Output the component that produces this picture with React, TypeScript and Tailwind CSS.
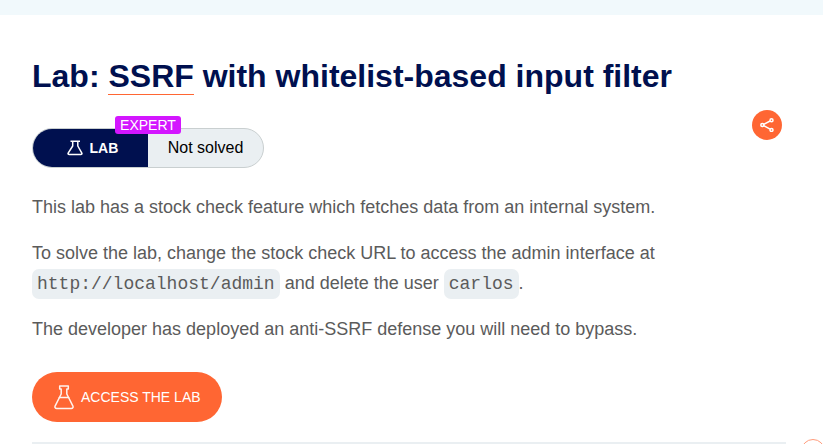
import React from 'react';

function Flask() {
  return (
    <svg className="h-[25px] w-[20px] shrink-0" viewBox="0 0 20 25" fill="none" stroke="#fff3ee" strokeWidth="1.5" strokeLinejoin="round" strokeLinecap="round">
      <path d="M5.700 1h8.600v3h-1.500V9l6 11.800c.7 1.500 0 2.700-1.500 2.700H2.700c-1.500 0-2.200-1.200-1.500-2.700L7.200 9V4H5.700z" />
      <path d="M5.300 12.500h9.400" />
    </svg>
  );
}

function LabFlask() {
  return (
    <svg className="h-4 w-4 shrink-0" viewBox="0 0 16 16" fill="none" stroke="white" strokeWidth="1.5" strokeLinejoin="round">
      <path d="M3.500 1.200h9.500M5.700 1.200v4.800L1.300 12.800c-.6 1 0 1.700 1 1.700h11.400c1 0 1.600-.7 1-1.700L10.800 6V1.200" />
    </svg>
  );
}

function Code({ children }: { children: React.ReactNode }) {
  return (
    <code className="rounded-[7px] bg-[#eaeff2] p-[5px] font-['Liberation_Mono',monospace] text-[18px] leading-[20px]">{children}</code>
  );
}

export default function App() {
  return (
    <div className="relative h-[444px] w-[823px] overflow-hidden bg-white font-['Liberation_Sans',Arial,sans-serif] text-[#5b5b5b]">
      <header className="h-[15px] bg-[#f1f9fc]" />
      <main className="ml-8 w-[754px]">
        <h1 className="pt-[41px] text-[32px] leading-[40px] font-bold whitespace-nowrap text-[#00104f]">
          Lab: <a className="border-b border-[#ff6633]">SSRF</a> with whitelist-based input filter
        </h1>
        <div className="mt-[14px] flex h-[58px] justify-between pr-1">
          <div className="relative mt-[18px] flex h-10 w-[232px] rounded-full border border-[#c9cfd0] bg-[#eaeff2]">
            <div className="flex w-[115px] items-center gap-[7px] rounded-l-full bg-[#00104f] pl-[33.5px] text-[14px] font-bold text-white">
              <LabFlask />
              <span>LAB</span>
            </div>
            <div className="flex flex-1 items-center justify-center text-[16px] text-black">
              <span>Not solved</span>
            </div>
            <span className="absolute top-[-13px] left-[82px] h-[18px] w-[66px] rounded-[3px] bg-[#d316ff] text-center text-[14px] leading-[18px] text-white">EXPERT</span>
          </div>
          <button className="flex h-[30px] w-[30px] items-center justify-center rounded-full bg-[#ff6633]">
            <svg className="h-[14px] w-[14px]" viewBox="0 0 14 14" fill="none" stroke="white" strokeWidth="1.500">
              <circle cx="2.300" cy="7" r="1.500" />
              <circle cx="11.500" cy="2.300" r="1.500" />
              <circle cx="11.500" cy="11.900" r="1.500" />
              <path d="M3.700 6.300l6.400-3.300M3.700 7.700l6.400 3.500" />
            </svg>
          </button>
        </div>
        <div className="mt-6 flex flex-col gap-4 text-[18px] leading-[30px]">
          <p>This lab has a stock check feature which fetches data from an internal system.</p>
          <p>
            To solve the lab, change the stock check URL to access the admin interface at<br />
            <Code>http://localhost/admin</Code> and delete the user <Code>carlos</Code>.
          </p>
          <p>The developer has deployed an anti-SSRF defense you will need to bypass.</p>
        </div>
        <button className="mt-7 flex h-[50px] w-[190px] items-center gap-[7px] rounded-full bg-[#ff6633] pl-[22px] text-[14px] text-white">
          <Flask />
          <span className="whitespace-nowrap">ACCESS THE LAB</span>
        </button>
        <hr className="mt-5 h-[2px] border-0 bg-[#eaeff2]" />
      </main>
      <div className="absolute top-[439px] left-[801px] h-6 w-6 rounded-full border border-[#ff9c7c]" />
    </div>
  );
}
